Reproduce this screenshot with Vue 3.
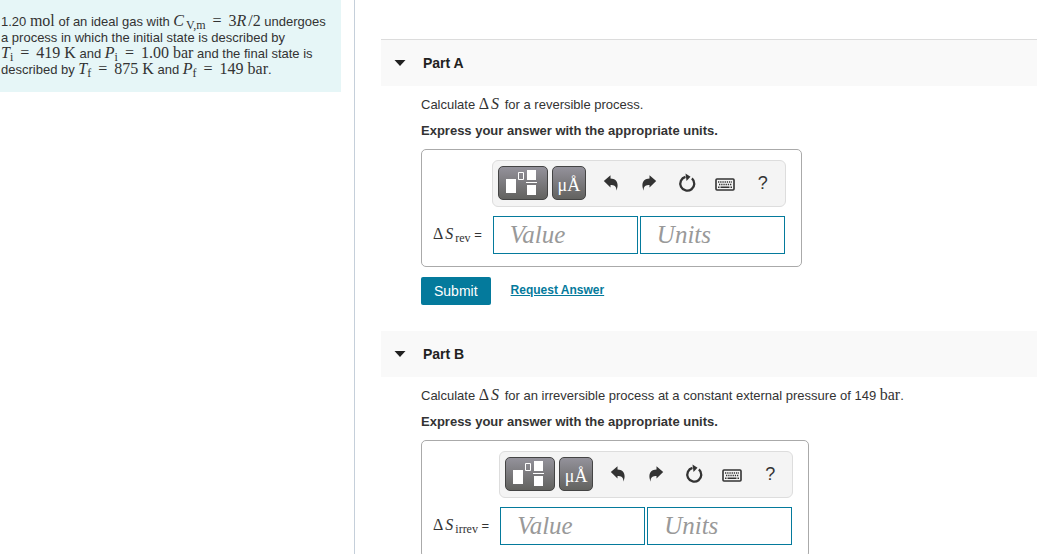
<script setup>
import { ref } from 'vue'

const parts = ref([
  { id: 'a', title: 'Part A', sub: 'rev', value: '', units: '', open: true },
  { id: 'b', title: 'Part B', sub: 'irrev', value: '', units: '', open: true },
])
</script>

<template>
  <div class="page">
    <aside class="side">
      <p class="problem">
        1.20 <span class="m">mol</span> of an ideal gas with
        <span class="m"><i class="var">C</i><sub>V,m</sub> <span class="eq">=</span> 3<i class="var">R</i>/2</span> undergoes<br />
        a process in which the initial state is described by<br />
        <span class="m"><i>T</i><sub>i</sub> <span class="eq">=</span> 419 K</span> and
        <span class="m"><i>P</i><sub>i</sub> <span class="eq">=</span> 1.00 bar</span> and the final state is<br />
        described by <span class="m"><i>T</i><sub>f</sub> <span class="eq">=</span> 875 K</span> and
        <span class="m"><i>P</i><sub>f</sub> <span class="eq">=</span> 149 bar</span>.
      </p>
    </aside>

    <main class="main">
      <section v-for="part in parts" :key="part.id" class="part">
        <h2 class="head">
          <button class="toggle" type="button" :aria-expanded="part.open" @click="part.open = !part.open">
            <svg class="caret" viewBox="0 0 12 6" width="12" height="6"><path d="M0.5 0h11L6 6z" fill="#212121" /></svg>
            <span>{{ part.title }}</span>
          </button>
        </h2>
        <div v-if="part.open" class="body">
          <p v-if="part.id === 'a'" class="question">
            Calculate <span class="m"><span class="delta">Δ</span><i class="var">S</i></span> for a reversible process.
          </p>
          <p v-else class="question">
            Calculate <span class="m"><span class="delta">Δ</span><i class="var">S</i></span> for an irreversible process at a constant external pressure of 149 <span class="m">bar</span>.
          </p>
          <p class="express">Express your answer with the appropriate units.</p>

          <form class="answer" @submit.prevent>
            <div class="box">
              <div class="tools" role="toolbar" aria-label="Answer tools">
                <button class="dark wide" type="button" aria-label="Templates">
                  <svg viewBox="0 0 50 34" width="50" height="34">
                    <path d="M8 13h10v14H8zM29 4h9v10h-9zM29 19h9v10h-9zM28 16h11v1H28z" fill="#fff" />
                    <path d="M20.500 6.500h5v7h-5z" fill="none" stroke="#fff" />
                  </svg>
                </button>
                <button class="dark symbols" type="button" aria-label="Symbols">μÅ</button>
                <button class="tool" type="button" aria-label="Undo">
                  <svg viewBox="0 0 16 16" width="16" height="16"><path d="M0.800 6 7.500 0.300v3.200c6 .2 9 4.800 5.800 12.200.4-4.200-1.800-5.700-5.800-5.700v2.500z" fill="#333" /></svg>
                </button>
                <button class="tool" type="button" aria-label="Redo">
                  <svg viewBox="0 0 16 16" width="16" height="16"><path d="M15.200 6 8.500 0.300v3.200c-6 .2-9 4.800-5.800 12.200-.4-4.200 1.800-5.700 5.800-5.700v2.500z" fill="#333" /></svg>
                </button>
                <button class="tool" type="button" aria-label="Reset">
                  <svg viewBox="0 0 20 20" width="20" height="20">
                    <path d="M14.900 5.400a7 7 0 1 1-6.400-1.500" fill="none" stroke="#333" stroke-width="2.300" />
                    <path d="M8.500 0.500 13.500 3.800 9.500 8z" fill="#333" />
                  </svg>
                </button>
                <button class="tool" type="button" aria-label="Keyboard shortcuts">
                  <svg class="keys" viewBox="0 0 20 13" width="20" height="13">
                    <rect x="1" y="1" width="18" height="11" rx="1" fill="#f4f4f4" stroke="#333" stroke-width="1.600" />
                    <path d="M3 4h14M4 6.500h13" stroke="#333" stroke-width="1.500" stroke-dasharray="1.300 .9" />
                    <path d="M3 9.200h1.500M5.500 9.200h9M15.500 9.200H17" stroke="#333" stroke-width="1.500" />
                  </svg>
                </button>
                <button class="tool help" type="button" aria-label="Help">?</button>
              </div>
              <label class="label" :for="'value-' + part.id">
                <span class="m"><span class="delta">Δ</span><i class="var">S</i><sub>{{ part.sub }}</sub></span> =
              </label>
              <div class="fields">
                <input :id="'value-' + part.id" v-model="part.value" class="field" type="text" placeholder="Value" />
                <input v-model="part.units" class="field" type="text" placeholder="Units" aria-label="Units" />
              </div>
            </div>
            <div class="actions">
              <button class="submit" type="submit">Submit</button>
              <a class="request" href="#">Request Answer</a>
            </div>
          </form>
        </div>
      </section>
    </main>
  </div>
</template>

<style>
html,
body {
  height: 100%;
  overflow: hidden;
}
#app {
  height: 100%;
}
</style>

<style scoped>
.page {
  display: flex;
  height: 100%;
  background: #fff;
  color: #333;
  font: 13px/16px "Liberation Sans", Arial, sans-serif;
}
p,
h2 {
  margin: 0;
}
.side {
  box-sizing: border-box;
  flex: 0 0 355px;
  padding-right: 13px;
  border-right: 1px solid #c5cfda;
}
.problem {
  padding: 14px 0 14px 1px;
  background: #e6f6f7;
  white-space: nowrap;
}
.m {
  font-family: "Liberation Serif", "Times New Roman", serif;
  font-size: 16px;
  line-height: 1px;
}
.m sub {
  font-size: 12px;
  line-height: 1px;
  vertical-align: -3px;
}
.eq {
  margin: 0 3px;
}
.delta {
  margin-right: 2px;
}
.var {
  margin-right: 2px;
}
.main {
  flex: 1;
  min-width: 0;
  padding: 39px 0 0 26px;
  overflow: hidden;
}
.part {
  margin-bottom: 26px;
}
.head {
  background: #f9f9f9;
}
.part:first-child .head {
  border-top: 1px solid #dcdcdc;
}
.toggle {
  display: flex;
  align-items: center;
  gap: 17px;
  width: 100%;
  height: 46px;
  padding: 0 13px;
  border: 0;
  background: none;
  color: #212121;
  font: bold 14px/16px "Liberation Sans", Arial, sans-serif;
}
.body {
  padding: 10px 0 0 40px;
}
.question {
  line-height: 18px;
}
.express {
  padding: 8px 0 9px;
  font-weight: bold;
  line-height: 18px;
}
.box {
  box-sizing: border-box;
  display: grid;
  grid-template-columns: auto auto;
  gap: 9px;
  width: fit-content;
  padding: 10px 15px 12px 11px;
  border: 1px solid #aaa;
  border-radius: 5px;
}
.tools {
  box-sizing: border-box;
  grid-column: 2;
  display: flex;
  align-items: center;
  height: 47px;
  padding: 0 3px 2px 5px;
  border: 1px solid #ddd;
  border-radius: 6px;
  background: #f4f4f4;
}
.dark {
  box-sizing: border-box;
  width: 34px;
  height: 34px;
  margin-right: 4px;
  padding: 0;
  border: 1px solid #444;
  border-radius: 5px;
  background: linear-gradient(#94929b, #62625f);
  color: #fff;
  font: 18px/32px "Liberation Serif", "Times New Roman", serif;
}
.wide {
  width: 50px;
}
.symbols {
  margin-right: 6px;
  padding-top: 2px;
}
.dark svg {
  display: block;
  margin: -1px;
}
.tool {
  display: flex;
  align-items: center;
  justify-content: center;
  width: 38px;
  height: 34px;
  padding: 0;
  border: 0;
  background: none;
  color: #333;
}
.keys {
  margin-top: 4px;
}
.help {
  font: 18px/20px "Liberation Sans", Arial, sans-serif;
}
.label {
  align-self: center;
  padding-right: 1px;
}
.fields {
  display: flex;
  gap: 2px;
  padding-left: 1px;
}
.field {
  box-sizing: border-box;
  width: 145px;
  height: 38px;
  padding: 0 16px;
  border: 1px solid #047a9c;
  border-radius: 0;
  background: #fff;
  color: #333;
  font: italic 25px/28px "Liberation Serif", "Times New Roman", serif;
}
.field::placeholder {
  color: #999;
  opacity: 1;
}
.actions {
  display: flex;
  align-items: center;
  gap: 20px;
  padding-top: 10px;
}
.submit {
  height: 28px;
  padding: 0 13px;
  border: 0;
  border-radius: 2px;
  background: #047a9c;
  color: #fff;
  font: 14px/20px "Liberation Sans", Arial, sans-serif;
}
.request {
  padding-bottom: 3px;
  color: #047a9c;
  font-size: 12px;
  font-weight: bold;
}
</style>
